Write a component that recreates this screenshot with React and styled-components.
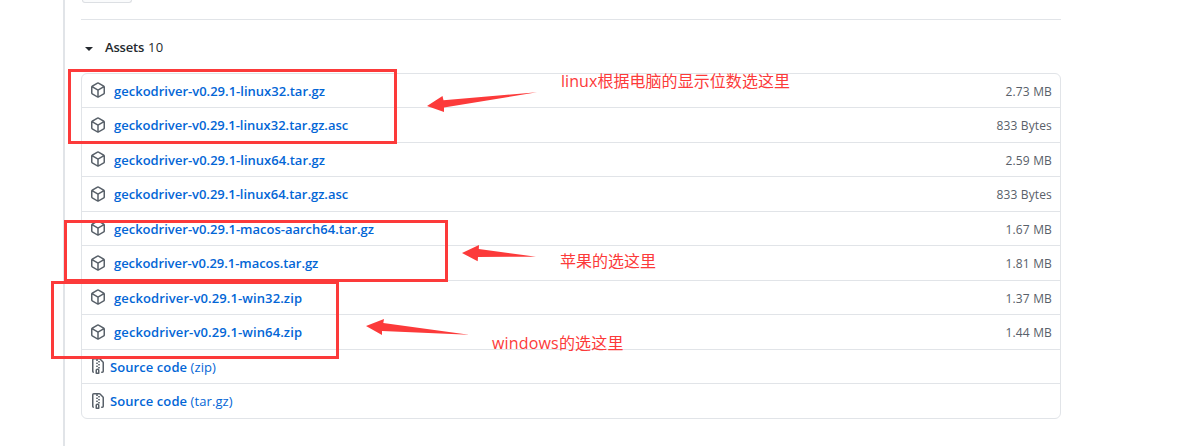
import React from "react";
import styled, { createGlobalStyle } from "styled-components";

const GlobalStyle = createGlobalStyle`
  * { box-sizing: border-box; }
  body {
    margin: 0;
    background: #fff;
    color: #24292e;
    font-family: "Open Sans", "Noto Sans", "Noto Sans CJK SC", sans-serif;
    font-size: 13px;
  }
`;

const Page = styled.div`
  position: relative;
  width: 1184px;
  height: 446px;
  overflow: hidden;
  padding-left: 63px;
`;

const Release = styled.main`
  display: flex;
  flex-direction: column;
  width: 998px;
  height: 446px;
  border-left: 2px solid #e1e4e8;
  padding-left: 16px;
`;

const ButtonStub = styled.div`
  width: 50px;
  height: 3px;
  margin-left: 1px;
  border: 1px solid #dcdfe3;
  border-top: 0;
  border-radius: 0 0 5px 5px;
  background: #fafbfc;
`;

const Summary = styled.div`
  display: flex;
  align-items: center;
  gap: 4px;
  margin-top: 16px;
  padding: 17px 4px 15.9px;
  border-top: 1px solid #e1e4e8;
  line-height: 20px;
`;

const Caret = styled.span`
  border: 4px solid transparent;
  border-top-color: #24292e;
  border-bottom: 0;
  margin: 3px 8px 0 0;
`;

const SummaryTitle = styled.span`
  font-weight: 600;
  letter-spacing: -0.2px;
`;

const Count = styled.span`
  letter-spacing: 0.4px;
`;

const AssetList = styled.ul`
  display: flex;
  flex-direction: column;
  list-style: none;
  margin: 0;
  padding: 0;
  height: 346px;
  border: 1px solid #e1e4e8;
  border-radius: 6px;
`;

const AssetRow = styled.li`
  display: flex;
  align-items: flex-start;
  flex: none;
  height: 34.5px;
  padding: 8.5px 8px 0;
  border-top: 1px solid #e1e4e8;

  &:first-child {
    height: 33.5px;
    border-top: 0;
  }
`;

const Icon = styled.svg`
  flex: none;
  width: 16px;
  height: 16px;
  fill: #586069;
`;

const Name = styled.a`
  flex: 1;
  margin: 0.5px 0 0 ${(p) => (p.$source ? "4px" : "8px")};
  color: #0366d6;
  font-weight: 600;
  line-height: 17px;
  letter-spacing: ${(p) => p.$tracking}px;
`;

const Format = styled.span`
  font-weight: 400;
`;

const Size = styled.span`
  margin-top: 0.5px;
  color: #586069;
  font-size: 12px;
  line-height: 18px;
  letter-spacing: 0.15px;
`;

const Marker = styled.div`
  position: absolute;
  left: ${(p) => p.$x}px;
  top: ${(p) => p.$y}px;
  width: ${(p) => p.$w}px;
  height: ${(p) => p.$h}px;
  border: 3px solid #fc3a3a;
`;

const Note = styled.div`
  position: absolute;
  left: ${(p) => p.$x}px;
  top: ${(p) => p.$y}px;
  color: #fc3a3a;
  font-family: "Open Sans", "Noto Sans CJK SC", sans-serif;
  font-size: 16px;
  line-height: 24px;
  letter-spacing: ${(p) => p.$tracking || 0}px;
  white-space: nowrap;
`;

const Arrows = styled.svg`
  position: absolute;
  left: 0;
  top: 0;
  fill: #fc3a3a;
  pointer-events: none;
`;

const PACKAGE =
  "M8.878.392a1.75 1.75 0 00-1.756 0l-5.25 3.045A1.75 1.75 0 001 4.951v6.098c0 .624.332 1.2.872 1.514l5.25 3.045a1.75 1.75 0 001.756 0l5.25-3.045c.54-.313.872-.89.872-1.514V4.951c0-.624-.332-1.2-.872-1.514L8.878.392zM7.875 1.69a.25.25 0 01.25 0l4.63 2.685L8 7.133 3.245 4.375l4.63-2.685zM2.5 5.677v5.372c0 .09.047.171.125.216l4.625 2.683V8.432L2.5 5.677zm6.25 8.271l4.625-2.683a.25.25 0 00.125-.216V5.677L8.75 8.432v5.516z";
const ZIP =
  "M3.5 1.75a.25.25 0 01.25-.25h3a.75.75 0 000 1.5h.5a.75.75 0 000-1.5h2.086a.25.25 0 01.177.073l2.914 2.914a.25.25 0 01.073.177v8.586a.25.25 0 01-.25.25h-.5a.75.75 0 000 1.5h.5A1.75 1.75 0 0014 13.25V4.664c0-.464-.184-.909-.513-1.237L10.573.513A1.75 1.75 0 009.336 0H3.75A1.75 1.75 0 002 1.75v11.5c0 .649.353 1.214.874 1.515a.75.75 0 10.752-1.298.25.25 0 01-.126-.217V1.75zM8.75 3a.75.75 0 000 1.5h.5a.75.75 0 000-1.5h-.5zM6 5.25a.75.75 0 01.75-.75h.5a.75.75 0 010 1.5h-.5A.75.75 0 016 5.25zm2 1.5A.75.75 0 018.75 6h.5a.75.75 0 010 1.5h-.5A.75.75 0 018 6.75zm-1.25.75a.75.75 0 000 1.5h.5a.75.75 0 000-1.5h-.5zM8 9.75A.75.75 0 018.75 9h.5a.75.75 0 010 1.5h-.5A.75.75 0 018 9.75zm-.75.75a1.75 1.75 0 00-1.75 1.75v3c0 .414.336.75.75.75h2.5a.75.75 0 00.75-.75v-3a1.75 1.75 0 00-1.75-1.75h-.5zM7 12.25a.25.25 0 01.25-.25h.5a.25.25 0 01.25.25v2.25H7v-2.25z";

const assets = [
  { name: "geckodriver-v0.29.1-linux32.tar.gz", size: "2.73 MB", tracking: 0.01 },
  { name: "geckodriver-v0.29.1-linux32.tar.gz.asc", size: "833 Bytes", tracking: -0.01 },
  { name: "geckodriver-v0.29.1-linux64.tar.gz", size: "2.59 MB", tracking: 0.01 },
  { name: "geckodriver-v0.29.1-linux64.tar.gz.asc", size: "833 Bytes", tracking: -0.01 },
  { name: "geckodriver-v0.29.1-macos-aarch64.tar.gz", size: "1.67 MB", tracking: 0 },
  { name: "geckodriver-v0.29.1-macos.tar.gz", size: "1.81 MB", tracking: -0.04 },
  { name: "geckodriver-v0.29.1-win32.zip", size: "1.37 MB", tracking: 0.11 },
  { name: "geckodriver-v0.29.1-win64.zip", size: "1.44 MB", tracking: 0.11 },
  { name: "Source code", format: "(zip)", tracking: 0.08 },
  { name: "Source code", format: "(tar.gz)", tracking: 0.08 },
];

export default function App() {
  return (
    <Page>
      <GlobalStyle />
      <Release>
        <ButtonStub />
        <Summary>
          <Caret />
          <SummaryTitle>Assets</SummaryTitle>
          <Count>10</Count>
        </Summary>
        <AssetList>
          {assets.map((a) => (
            <AssetRow key={a.name + (a.format || "")}>
              <Icon viewBox="0 0 16 16">
                <path fillRule="evenodd" d={a.format ? ZIP : PACKAGE} />
              </Icon>
              <Name $source={!!a.format} $tracking={a.tracking}>
                {a.name}
                {a.format && <Format> {a.format}</Format>}
              </Name>
              {a.size && <Size>{a.size}</Size>}
            </AssetRow>
          ))}
        </AssetList>
      </Release>

      <Marker $x={68} $y={69} $w={329} $h={75} />
      <Marker $x={64} $y={220} $w={384} $h={62} />
      <Marker $x={51} $y={281} $w={288} $h={78} />

      <Arrows width="1184" height="446" viewBox="0 0 1184 446">
        <polygon points="427,106 442.5,96 443.5,100.3 537,92.3 444,107.5 444,112" />
        <polygon points="462,253 479,245 478.8,249 536,256.7 478,257 477.7,261.3" />
        <polygon points="366,326 384,319 383.3,323 469,334.7 382,331 382,335" />
      </Arrows>

      <Note $x={561} $y={69} $tracking={0.06}>linux根据电脑的显示位数选这里</Note>
      <Note $x={560} $y={249}>苹果的选这里</Note>
      <Note $x={492} $y={331} $tracking={0.17}>windows的选这里</Note>
    </Page>
  );
}
